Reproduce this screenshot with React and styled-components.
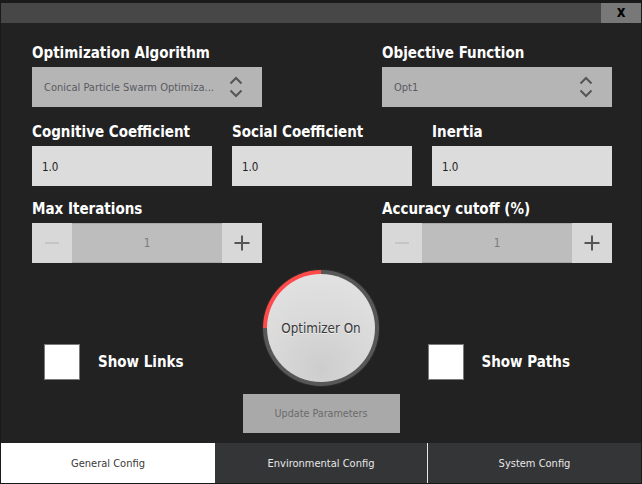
import React from 'react';
import styled, { createGlobalStyle } from 'styled-components';

const FONT = '"DejaVu Sans Condensed", "DejaVu Sans", "Liberation Sans", sans-serif';

const GlobalStyle = createGlobalStyle`
  html, body {
    margin: 0;
    padding: 0;
    background: #222222;
  }
  * {
    box-sizing: border-box;
  }
`;

const Window = styled.div`
  width: 642px;
  height: 484px;
  display: flex;
  flex-direction: column;
  background: #222222;
  border: 1px solid #1a1a1a;
  border-top-width: 3px;
  font-family: ${FONT};
  font-stretch: condensed;
`;

const TitleBar = styled.div`
  height: 20px;
  display: flex;
  justify-content: flex-end;
  background: #474747;
`;

const CloseButton = styled.button`
  width: 40px;
  height: 20px;
  border: none;
  padding: 0 0 2px;
  background: #787878;
  color: #000;
  font-family: ${FONT};
  font-stretch: condensed;
  font-weight: bold;
  font-size: 15px;
  line-height: 18px;
`;

const Content = styled.div`
  flex: 1;
  display: flex;
  flex-direction: column;
  padding: 20px 29px 0 31px;
`;

const Row = styled.div`
  display: flex;
  justify-content: space-between;
  margin-top: ${(p) => p.$gap || 0}px;
`;

const Field = styled.div`
  width: ${(p) => p.$width}px;
  display: flex;
  flex-direction: column;
  gap: 4px;
`;

const Label = styled.div`
  height: 20px;
  line-height: 20px;
  color: #ffffff;
  font-weight: bold;
  font-size: 15px;
  white-space: nowrap;
`;

const Select = styled.div`
  height: 40px;
  display: flex;
  align-items: center;
  justify-content: space-between;
  padding: 0 19px 0 12px;
  background: #b5b5b5;
  color: #5a5a62;
  font-size: 11px;
  white-space: nowrap;
`;

const Input = styled.div`
  height: 40px;
  display: flex;
  align-items: center;
  padding: 1px 0 0 10px;
  background: #dcdcdc;
  color: #1c1c1c;
  font-size: 11.5px;
`;

const Spin = styled.div`
  height: 40px;
  display: grid;
  grid-template-columns: 40px 1fr 40px;
`;

const SpinButton = styled.div`
  display: flex;
  align-items: center;
  justify-content: center;
  background: #d8d8d8;
`;

const SpinValue = styled.div`
  display: flex;
  align-items: center;
  justify-content: center;
  background: #bdbdbd;
  border-top: 1px solid #a9a9a9;
  border-bottom: 1px solid #a9a9a9;
  color: #7a7a7a;
  font-size: 11.5px;
`;

const Middle = styled.div`
  flex: 1;
  display: grid;
  grid-template-columns: 1fr 157px 1fr;
  margin: 0 -29px 0 -31px;
`;

const Side = styled.div`
  display: flex;
  align-items: center;
  gap: 18px;
  align-self: start;
  margin-top: 81px;
  padding-left: ${(p) => p.$inset}px;
`;

const Box = styled.div`
  width: 36px;
  height: 36px;
  background: #ffffff;
  border: 1px solid #7a7a7a;
`;

const SideLabel = styled(Label)`
  height: auto;
`;

const Center = styled.div`
  display: flex;
  flex-direction: column;
  align-items: center;
  padding-top: 7px;
`;

const Ring = styled.div`
  width: 116px;
  height: 116px;
  padding: 4px;
  border-radius: 50%;
  background: conic-gradient(#575757 0deg 270deg, #ff4a4a 270deg 360deg);
  box-shadow: 0 0 0 1px #2c2c2c;
`;

const Face = styled.div`
  width: 100%;
  height: 100%;
  border-radius: 50%;
  display: flex;
  align-items: center;
  justify-content: center;
  background: radial-gradient(circle at 50% 88%, #cdcdcd 0%, #d9d9d9 45%, #e4e4e4 100%);
  color: #3a3a3a;
  font-size: 13.3px;
  text-shadow: 0 1px 0 rgba(255, 255, 255, 0.6);
`;

const UpdateButton = styled.div`
  width: 157px;
  height: 39px;
  margin-top: 8px;
  display: flex;
  align-items: center;
  justify-content: center;
  background: #a9a9a9;
  color: #6b6b6b;
  font-size: 10.7px;
`;

const Tabs = styled.div`
  height: 40px;
  display: grid;
  grid-template-columns: 214px 212px 1fr;
`;

const Tab = styled.div`
  display: flex;
  align-items: center;
  justify-content: center;
  padding-top: 1px;
  background: ${(p) => (p.$active ? '#ffffff' : '#343537')};
  color: ${(p) => (p.$active ? '#3a3a3a' : '#e8e8e8')};
  border-left: ${(p) => (p.$divider ? '1px solid #e6e6e6' : 'none')};
  font-size: 11px;
`;

const Chevrons = () => (
  <svg width="14" height="22" viewBox="0 0 14 22" fill="none" stroke="#555" strokeWidth="2">
    <path d="M1.5 7.5 L7 2 L12.5 7.5" />
    <path d="M1.5 14.5 L7 20 L12.5 14.5" />
  </svg>
);

const Minus = () => (
  <svg width="16" height="16" viewBox="0 0 16 16">
    <path d="M1 8 H15" stroke="#c6c6c6" strokeWidth="2" />
  </svg>
);

const Plus = () => (
  <svg width="16" height="16" viewBox="0 0 16 16">
    <path d="M0.5 8 H15.5 M8 0.5 V15.5" stroke="#555" strokeWidth="2" />
  </svg>
);

const SelectField = ({ label, value }) => (
  <Field $width={230}>
    <Label>{label}</Label>
    <Select>
      <span>{value}</span>
      <Chevrons />
    </Select>
  </Field>
);

const InputField = ({ label, value }) => (
  <Field $width={180}>
    <Label>{label}</Label>
    <Input>{value}</Input>
  </Field>
);

const SpinField = ({ label, value }) => (
  <Field $width={230}>
    <Label>{label}</Label>
    <Spin>
      <SpinButton><Minus /></SpinButton>
      <SpinValue>{value}</SpinValue>
      <SpinButton><Plus /></SpinButton>
    </Spin>
  </Field>
);

export default function App() {
  return (
    <>
      <GlobalStyle />
      <Window>
        <TitleBar>
          <CloseButton>x</CloseButton>
        </TitleBar>
        <Content>
          <Row>
            <SelectField label="Optimization Algorithm" value="Conical Particle Swarm Optimiza..." />
            <SelectField label="Objective Function" value="Opt1" />
          </Row>
          <Row $gap={15}>
            <InputField label="Cognitive Coefficient" value="1.0" />
            <InputField label="Social Coefficient" value="1.0" />
            <InputField label="Inertia" value="1.0" />
          </Row>
          <Row $gap={13}>
            <SpinField label="Max Iterations" value="1" />
            <SpinField label="Accuracy cutoff (%)" value="1" />
          </Row>
          <Middle>
            <Side $inset={43}>
              <Box />
              <SideLabel>Show Links</SideLabel>
            </Side>
            <Center>
              <Ring>
                <Face>Optimizer On</Face>
              </Ring>
              <UpdateButton>Update Parameters</UpdateButton>
            </Center>
            <Side $inset={28}>
              <Box />
              <SideLabel>Show Paths</SideLabel>
            </Side>
          </Middle>
        </Content>
        <Tabs>
          <Tab $active>General Config</Tab>
          <Tab>Environmental Config</Tab>
          <Tab $divider>System Config</Tab>
        </Tabs>
      </Window>
    </>
  );
}
